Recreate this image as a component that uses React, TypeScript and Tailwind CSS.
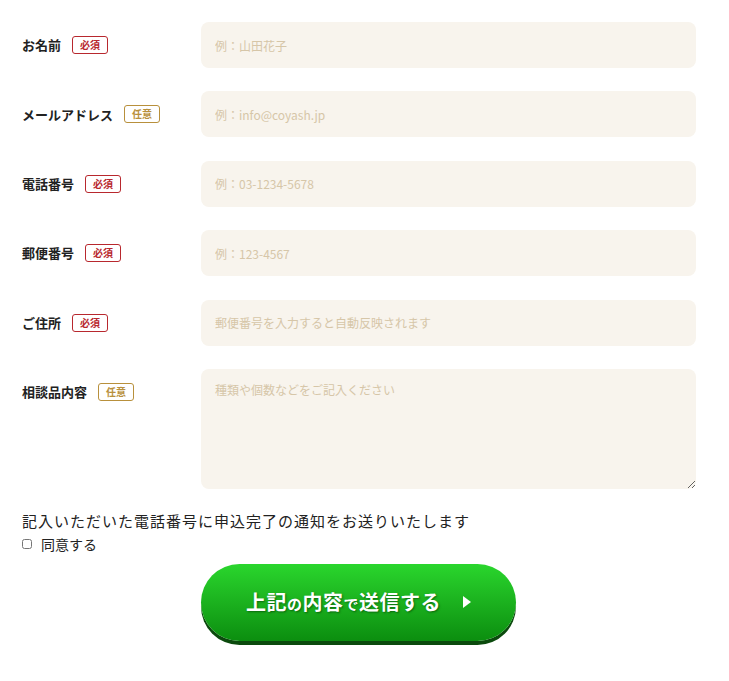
import React from "react";

type Field = {
  label: string;
  required: boolean;
  placeholder: string;
};

const fields: Field[] = [
  { label: "お名前", required: true, placeholder: "例：山田花子" },
  { label: "メールアドレス", required: false, placeholder: "例：info@coyash.jp" },
  { label: "電話番号", required: true, placeholder: "例：03-1234-5678" },
  { label: "郵便番号", required: true, placeholder: "例：123-4567" },
  { label: "ご住所", required: true, placeholder: "郵便番号を入力すると自動反映されます" },
];

function Tag({ required }: { required: boolean }) {
  return required ? (
    <span className="ml-[11px] inline-flex h-[18px] w-[36px] items-center justify-center rounded-[3px] border border-[#b8282e] text-[10px] font-bold leading-none text-[#b8282e]">
      必須
    </span>
  ) : (
    <span className="ml-[11px] inline-flex h-[18px] w-[36px] items-center justify-center rounded-[3px] border border-[#b8903c] text-[10px] font-bold leading-none text-[#b8903c]">
      任意
    </span>
  );
}

export default function App() {
  return (
    <div
      className="min-h-[681px] w-[729px] bg-white pl-[22px] pt-[22px] text-[#222]"
      style={{ fontFamily: '"Noto Sans CJK JP", "Noto Sans", sans-serif' }}
    >
      <div className="flex w-[674px] flex-col gap-[23.4px]">
        {fields.map((f) => (
          <div key={f.label} className="flex items-center">
            <div className="flex w-[179px] items-center text-[13px] font-bold">
              {f.label}
              <Tag required={f.required} />
            </div>
            <input
              placeholder={f.placeholder}
              className="h-[46px] w-[495px] rounded-[8px] bg-[#f8f4ed] px-[14px] text-[12px] outline-none placeholder:text-[#d6c6a8]"
            />
          </div>
        ))}
        <div className="flex items-start">
          <div className="flex h-[46px] w-[179px] items-center text-[13px] font-bold">
            相談品内容
            <Tag required={false} />
          </div>
          <textarea
            placeholder="種類や個数などをご記入ください"
            className="h-[120px] w-[495px] rounded-[8px] bg-[#f8f4ed] px-[14px] py-[12px] text-[12px] outline-none placeholder:text-[#d6c6a8]"
          />
        </div>
      </div>

      <p className="mt-[21px] text-[15px] leading-[22px] tracking-[1px] text-[#222]">
        記入いただいた電話番号に申込完了の通知をお送りいたします
      </p>
      <label className="mt-[1px] flex items-center text-[14px] leading-[22px]">
        <input type="checkbox" className="mr-[9px] h-[10px] w-[10px]" />
        同意する
      </label>

      <div className="mt-[9px] pl-[179px]">
        <button className="flex h-[77px] w-[315px] items-center justify-center rounded-full bg-gradient-to-b from-[#2ad62d] to-[#0b8e0f] text-white shadow-[0_4px_0_#0b4a0d]">
          <span
            className="text-[20px] font-bold tracking-[0.5px]"
            style={{ textShadow: "1px 1px 2px rgba(0,60,0,0.6)" }}
          >
            上記<span className="text-[15px]">の</span>内容<span className="text-[15px]">で</span>送信する
          </span>
          <span className="ml-[22px] h-0 w-0 border-y-[6px] border-l-[8px] border-y-transparent border-l-white" />
        </button>
      </div>
    </div>
  );
}
